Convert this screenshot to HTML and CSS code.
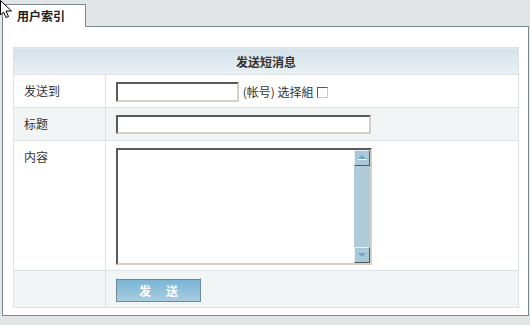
FILE: index.html
```html
<!DOCTYPE html>
<html lang="zh-CN">
<head>
    <meta charset="UTF-8">
    <title>发送短消息</title>
    <link rel="stylesheet" href="styles.css">
</head>
<body>
<div class="page">
    <div class="tabs">
        <div class="tab">用户索引</div>
    </div>
    <div class="panel">
        <form class="msg-form">
            <table class="form-table">
                <tr>
                    <th colspan="2" class="head">发送短消息</th>
                </tr>
                <tr class="row">
                    <td class="label">发送到</td>
                    <td class="field">
                        <input type="text" class="txt txt-short">
                        <span class="hint">(帐号) 选择組</span>
                        <input type="checkbox" class="chk">
                    </td>
                </tr>
                <tr class="row alt">
                    <td class="label">标题</td>
                    <td class="field"><input type="text" class="txt txt-long"></td>
                </tr>
                <tr class="row">
                    <td class="label">内容</td>
                    <td class="field">
                        <div class="area-box">
                            <textarea class="area"></textarea>
                            <div class="scroll">
                                <span class="sb-btn sb-up"></span>
                                <span class="sb-track"></span>
                                <span class="sb-btn sb-down"></span>
                            </div>
                        </div>
                    </td>
                </tr>
                <tr class="row alt">
                    <td class="label"></td>
                    <td class="field btn-cell"><button type="submit" class="btn">发<span class="gap"></span>送</button></td>
                </tr>
            </table>
        </form>
    </div>
</div>
<svg class="cursor" width="14" height="20" viewBox="0 0 14 20">
    <path d="M0.5 0.5 L0.5 15 L3.5 12 L6 17.5 L8.5 16.5 L6 11 L11.5 11 Z" fill="#fff" stroke="#000" stroke-width="1"/>
</svg>
</body>
</html>
```

FILE: styles.css
```css
body {
    margin: 0;
    background-color: #e1e5e6;
    font-family: "Noto Sans CJK SC", "Liberation Sans", sans-serif;
    font-size: 12px;
    color: #333;
}
.page {
    padding: 4px 1px 0 2px;
}
.tabs {
    display: flex;
}
.tab {
    height: 23px;
    line-height: 22px;
    padding-left: 14px;
    box-sizing: border-box;
    width: 84px;
    background-color: #fff;
    border: 1px solid #7a8a92;
    border-bottom: none;
    margin-bottom: -1px;
    position: relative;
    z-index: 1;
    font-weight: bold;
    color: #222;
    font-size: 12px;
}
.panel {
    background-color: #fff;
    border: 1px solid #7a8a92;
    padding: 20px 10px 9px 10px;
    height: 290px;
    box-sizing: border-box;
}
.msg-form {
    margin: 0;
}
.form-table {
    width: 506px;
    border-collapse: collapse;
    border: 1px solid #dce2e4;
}
.form-table td,
.form-table th {
    border: 1px solid #dce2e4;
}
.head {
    height: 26px;
    padding: 0;
    background: linear-gradient(#d4e1e9, #e9f1f5);
    font-weight: bold;
    color: #333;
    text-align: center;
}
.row td {
    vertical-align: top;
    padding: 7px 10px 5px 10px;
}
.alt td {
    background-color: #f1f5f6;
}
.label {
    width: 71px;
    line-height: 18px;
}
.field {
    line-height: 20px;
}
.txt {
    box-sizing: border-box;
    height: 20px;
    border: 2px solid;
    border-color: #5a5a5a #d4d0c8 #d4d0c8 #5a5a5a;
    padding: 0 2px;
    vertical-align: top;
    background: #fff;
    font: inherit;
}
.txt-short {
    width: 123px;
}
.txt-long {
    width: 255px;
    height: 19px;
}
.hint {
    margin-left: 1px;
    vertical-align: top;
}
.chk {
    appearance: none;
    width: 11px;
    height: 11px;
    margin: 5px 0 0 1px;
    vertical-align: top;
    border: 1px solid;
    border-color: #555 #ccc #ccc #555;
    background: #fff;
}
.area-box {
    display: flex;
    width: 256px;
    height: 117px;
    box-sizing: border-box;
    border: 2px solid;
    border-color: #5a5a5a #d4d0c8 #d4d0c8 #5a5a5a;
    background: #fff;
}
.area {
    flex: 1;
    border: none;
    resize: none;
    outline: none;
    font: inherit;
    padding: 2px;
}
.scroll {
    width: 16px;
    display: flex;
    flex-direction: column;
    background-color: #afcbd7;
}
.sb-btn {
    height: 16px;
    box-sizing: border-box;
    border: 1px solid;
    border-color: #e8f2f6 #505a60 #505a60 #e8f2f6;
    background-color: #a9c9d8;
    position: relative;
}
.sb-track {
    flex: 1;
}
.sb-up::after {
    content: "";
    position: absolute;
    left: 3px;
    top: 4px;
    border-left: 4px solid transparent;
    border-right: 4px solid transparent;
    border-bottom: 4px solid #6aa6c8;
}
.sb-up::before {
    content: "";
    position: absolute;
    left: 3px;
    top: 8px;
    width: 8px;
    height: 1px;
    background: #fff;
}
.sb-down::after {
    content: "";
    position: absolute;
    left: 3px;
    top: 5px;
    border-left: 4px solid transparent;
    border-right: 4px solid transparent;
    border-top: 4px solid #6aa6c8;
}
.btn-cell {
    padding-top: 5px;
}
.btn {
    width: 85px;
    height: 24px;
    border: 1px solid #6b8a9a;
    border-top-color: #eef6fa;
    background: linear-gradient(#78b3d4, #a9cde0);
    box-shadow: inset 0 1px 0 #6b8a9a;
    color: #fff;
    font-family: inherit;
    font-size: 12px;
    font-weight: bold;
    padding: 0;
}
.gap {
    display: inline-block;
    width: 15px;
}
.cursor {
    position: absolute;
    left: 0;
    top: 0;
    z-index: 2;
}
```
